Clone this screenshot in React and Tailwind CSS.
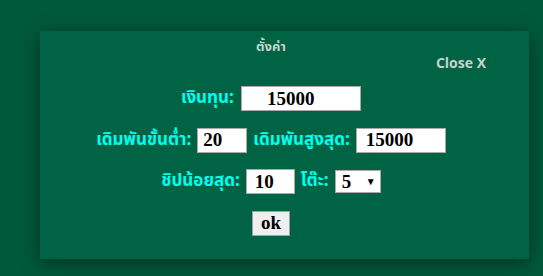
export default function App() {
  return (
    <div className="w-[543px] h-[276px] bg-[#00593b] overflow-hidden pt-[31px] pl-[40px]">
      <div className="w-[489px] h-[228px] bg-[#006344] shadow-[0_4px_18px_rgba(0,0,0,0.45)] pr-[27px] font-['Tahoma','Noto_Sans_Thai','Noto_Sans',sans-serif]">
        <div className="flex flex-col items-center">
          <div className="pt-[8px] h-[25px] text-[13px] font-bold text-[#c9d2cc] leading-[17px]">ตั้งค่า</div>
          <div className="self-stretch text-right pr-[16px] text-[14px] font-bold text-[#c9d2cc] leading-[16px]">Close X</div>
          <div className="mt-[14px] flex items-center gap-[7px]">
            <span className="text-[17px] font-bold text-[#00ffee]">เงินทุน:</span>
            <div className="w-[120px] h-[25px] bg-white border border-[#a9a9a9] pl-[25px] flex items-center font-['Liberation_Serif',serif] font-bold text-[19px] text-black">15000</div>
          </div>
          <div className="mt-[16px] flex items-center gap-[6px]">
            <span className="text-[17px] font-bold text-[#00ffee]">เดิมพันขั้นต่ำ:</span>
            <div className="w-[50px] h-[25px] bg-white border border-[#a9a9a9] pl-[5px] flex items-center font-['Liberation_Serif',serif] font-bold text-[19px] text-black">20</div>
            <span className="text-[17px] font-bold text-[#00ffee]">เดิมพันสูงสุด:</span>
            <div className="w-[90px] h-[25px] bg-white border border-[#a9a9a9] pl-[9px] flex items-center font-['Liberation_Serif',serif] font-bold text-[19px] text-black">15000</div>
          </div>
          <div className="mt-[16px] flex items-center gap-[6px]">
            <span className="text-[17px] font-bold text-[#00ffee]">ชิปน้อยสุด:</span>
            <div className="w-[49px] h-[25px] bg-white border border-[#a9a9a9] pl-[8px] flex items-center font-['Liberation_Serif',serif] font-bold text-[19px] text-black">10</div>
            <span className="text-[17px] font-bold text-[#00ffee]">โต๊ะ:</span>
            <div className="w-[46px] h-[23px] bg-white border border-[#a9a9a9] pl-[6px] pr-[4px] flex items-center justify-between font-['Liberation_Serif',serif] font-bold text-[19px] text-black">
              <span>5</span>
              <span className="text-[10px] font-sans">▼</span>
            </div>
          </div>
          <button className="mt-[16px] w-[38px] h-[25px] bg-[#efefef] border border-[#a0a0a0] flex items-center justify-center font-['Liberation_Serif',serif] font-bold text-[19px] text-black">ok</button>
        </div>
      </div>
    </div>
  );
}
